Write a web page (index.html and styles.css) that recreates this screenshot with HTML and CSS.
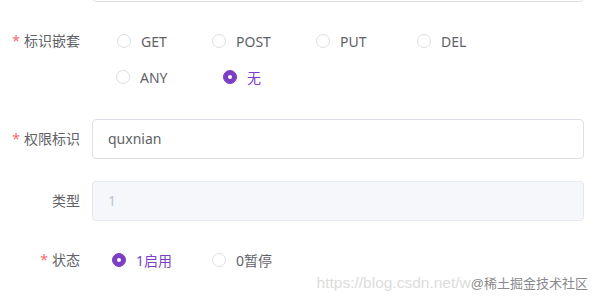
FILE: index.html
```html
<!DOCTYPE html>
<html lang="zh">
<head>
<meta charset="utf-8">
<link rel="stylesheet" href="styles.css">
</head>
<body>
<div class="page">
  <form class="form">
    <div class="item item-top">
      <div class="label"></div>
      <div class="content"><div class="input"></div></div>
    </div>

    <div class="item item-radio">
      <div class="label line36"><span class="req">*</span>标识嵌套</div>
      <div class="content group group-method">
        <div class="radio-row">
          <label class="radio w95"><span class="dot"></span><span class="txt">GET</span></label>
          <label class="radio w104"><span class="dot"></span><span class="txt">POST</span></label>
          <label class="radio w101"><span class="dot"></span><span class="txt">PUT</span></label>
          <label class="radio"><span class="dot"></span><span class="txt">DEL</span></label>
        </div>
        <div class="radio-row row2">
          <label class="radio w107"><span class="dot"></span><span class="txt">ANY</span></label>
          <label class="radio checked"><span class="dot"></span><span class="txt">无</span></label>
        </div>
      </div>
    </div>

    <div class="item item-input">
      <div class="label line40"><span class="req">*</span>权限标识</div>
      <div class="content"><div class="input">quxnian</div></div>
    </div>

    <div class="item item-input2">
      <div class="label line40">类型</div>
      <div class="content"><div class="input disabled">1</div></div>
    </div>

    <div class="item item-status">
      <div class="label line36"><span class="req">*</span>状态</div>
      <div class="content group group-status">
        <div class="radio-row">
          <label class="radio w100 checked"><span class="dot"></span><span class="txt">1启用</span></label>
          <label class="radio"><span class="dot"></span><span class="txt">0暂停</span></label>
        </div>
      </div>
    </div>
  </form>
  <div class="watermark"><span class="wm-url">https://blog.csdn.net/w</span><span class="wm-brand">@稀土掘金技术社区</span></div>
</div>
</body>
</html>
```

FILE: styles.css
```css
* { box-sizing: border-box; }
html, body { margin: 0; padding: 0; background: #fff; }
body {
  font-family: "Noto Sans", "Noto Sans CJK SC", sans-serif;
  font-size: 14px;
  color: #606266;
}
.page {
  position: relative;
  width: 598px;
  height: 302px;
  overflow: hidden;
}
.form {
  display: flex;
  flex-direction: column;
  margin-top: -38px;
  width: 584px;
}
.item {
  display: flex;
  align-items: flex-start;
}
.item-top { margin-bottom: 21px; }
.item-radio { margin-bottom: 24px; }
.item-input { margin-bottom: 22px; }
.item-input2 { margin-bottom: 21px; }

.label {
  width: 92px;
  flex: none;
  padding-right: 12px;
  text-align: right;
  color: #606266;
  font-size: 14px;
  white-space: nowrap;
}
.line36 { line-height: 36px; }
.line40 { line-height: 40px; }
.req {
  color: #f56c6c;
  margin-right: 4px;
  font-size: 14px;
}
.content { flex: 1; min-width: 0; }

.input {
  height: 40px;
  border: 1px solid #dcdfe6;
  border-radius: 4px;
  padding: 0 15px;
  line-height: 38px;
  color: #606266;
  font-size: 14px;
  background: #fff;
}
.input.disabled {
  background: #f5f7fa;
  border-color: #e4e7ed;
  color: #c0c4cc;
}

.group-method { padding-left: 25px; }
.group-status { padding-left: 20px; }
.radio-row {
  display: flex;
  align-items: center;
  height: 36px;
}
.row2 { margin-left: -1px; }
.radio {
  display: flex;
  align-items: center;
  flex: none;
  cursor: pointer;
}
.w95 { width: 95px; }
.w100 { width: 100px; }
.w101 { width: 101px; }
.w104 { width: 104px; }
.w107 { width: 107px; }
.dot {
  width: 14px;
  height: 14px;
  border: 1px solid #dcdfe6;
  border-radius: 50%;
  background: #fff;
  position: relative;
  flex: none;
}
.txt {
  margin-left: 10px;
  font-size: 14px;
  color: #606266;
}
.radio.checked .dot {
  background: #7b3fc6;
  border-color: #7b3fc6;
}
.radio.checked .dot::after {
  content: "";
  position: absolute;
  width: 4px;
  height: 4px;
  border-radius: 50%;
  background: #fff;
  left: 50%;
  top: 50%;
  transform: translate(-50%, -50%);
}
.radio.checked .txt { color: #7b3fc6; }

.watermark {
  position: absolute;
  right: 10px;
  top: 273px;
  line-height: 20px;
  white-space: nowrap;
  font-family: "Liberation Sans", "Noto Sans CJK SC", sans-serif;
}
.wm-url { color: #dcdcdc; font-size: 15.5px; }
.wm-brand { color: #8a8a8a; font-size: 13px; }
```
